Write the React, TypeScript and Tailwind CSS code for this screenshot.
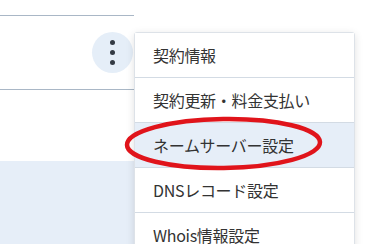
const items = [
  "契約情報",
  "契約更新・料金支払い",
  "ネームサーバー設定",
  "DNSレコード設定",
  "Whois情報設定",
];

export default function App() {
  return (
    <div
      className="relative w-[374px] h-[244px] overflow-hidden bg-white text-[#333]"
      style={{ fontFamily: '"Noto Sans CJK JP", "Noto Sans", sans-serif' }}
    >
      {/* background page */}
      <div className="w-[134px] pt-[15px]">
        <div className="h-[75px] border-y border-[#a9b7c6] flex items-center justify-end">
          <button className="w-[41px] h-[41px] mr-[1px] rounded-full bg-[#e5eef8] flex flex-col items-center justify-center gap-[5px]">
            <span className="block w-[5px] h-[5px] rounded-full bg-[#333a44]" />
            <span className="block w-[5px] h-[5px] rounded-full bg-[#333a44]" />
            <span className="block w-[5px] h-[5px] rounded-full bg-[#333a44]" />
          </button>
        </div>
        <div className="mt-[71px] h-[90px] bg-[#e6eef8] flex flex-col justify-end">
          <div className="w-[104px] h-[6px] bg-white" />
        </div>
      </div>

      {/* dropdown menu */}
      <div className="absolute left-[134px] top-[32px] w-[221px] bg-white border border-[#dde2e8] rounded-[3px] shadow-[0_2px_8px_rgba(0,0,0,0.12)]">
        {items.map((label, i) => (
          <div
            key={label}
            className={
              "h-[45px] px-[18px] flex items-center text-[16px] tracking-[-0.3px] border-b border-[#d3dbe4] " +
              (i === 2 ? "bg-[#e6eef8]" : "bg-white")
            }
          >
            {label}
          </div>
        ))}
      </div>

      {/* red annotation */}
      <svg className="absolute left-0 top-0" width="374" height="244">
        <ellipse
          cx="223.5"
          cy="143.5"
          rx="96.5"
          ry="24.5"
          fill="none"
          stroke="#e0141b"
          strokeWidth="4.5"
          transform="rotate(-0.8 223.5 143.5)"
        />
      </svg>
    </div>
  );
}
